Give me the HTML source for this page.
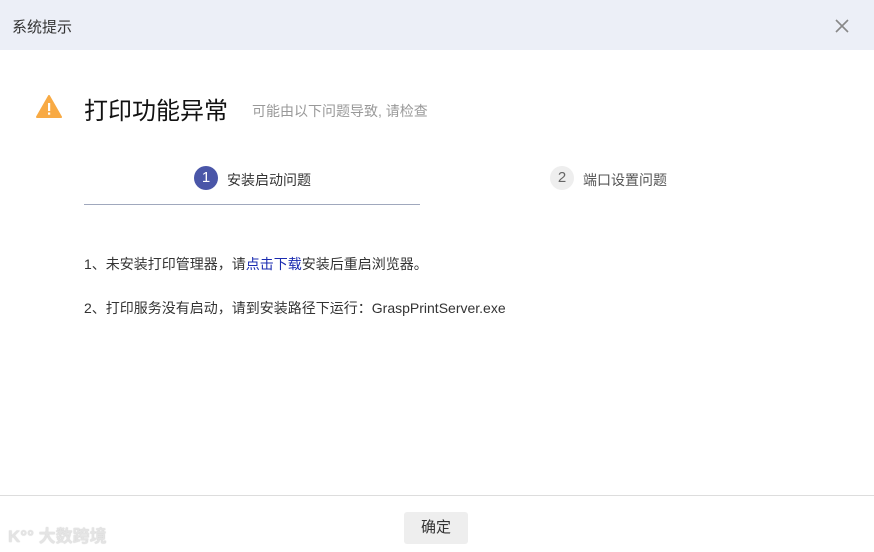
<!DOCTYPE html>
<html><head><meta charset="utf-8"><style>
*{margin:0;padding:0;box-sizing:border-box}
body{width:874px;height:552px;background:#fff;font-family:"Liberation Sans","Noto Sans CJK SC",sans-serif;position:relative;overflow:hidden;color:#333}
.hd{position:absolute;left:0;top:0;width:874px;height:50px;background:#eceff7}
.hd .t{position:absolute;left:12px;top:16px;font-size:15px;color:#333}
.abs{position:absolute;white-space:nowrap}
</style></head><body>
<div class="hd"><div class="t">系统提示</div>
<svg class="abs" style="left:835px;top:19px" width="14" height="14"><path d="M1 1L13 13M13 1L1 13" stroke="#888" stroke-width="1.6"/></svg></div>
<svg class="abs" style="left:36px;top:95px" width="26" height="23"><path d="M13 1L25 22H1Z" fill="#f8aa44" stroke="#f8aa44" stroke-linejoin="round" stroke-width="2"/><rect x="12" y="8" width="2.2" height="8" fill="#fff"/><rect x="12" y="17.5" width="2.2" height="2.2" fill="#fff"/></svg>
<div class="abs" style="left:84px;top:91px;font-size:24px;color:#111">打印功能异常</div>
<div class="abs" style="left:252px;top:101px;font-size:14px;color:#999">可能由以下问题导致, 请检查</div>
<div class="abs" style="left:194px;top:166px;width:24px;height:24px;border-radius:50%;background:#4a56a8;color:#fff;font-size:15px;text-align:center;line-height:24px">1</div>
<div class="abs" style="left:227px;top:170px;font-size:14px;color:#333">安装启动问题</div>
<div class="abs" style="left:84px;top:204px;width:336px;height:1px;background:#a0a8bd"></div>
<div class="abs" style="left:550px;top:166px;width:24px;height:24px;border-radius:50%;background:#eee;color:#666;font-size:15px;text-align:center;line-height:24px">2</div>
<div class="abs" style="left:583px;top:170px;font-size:14px;color:#555">端口设置问题</div>
<div class="abs" style="left:84px;top:254px;font-size:14px;color:#333">1、未安装打印管理器，请<span style="color:#1a2bb0">点击下载</span>安装后重启浏览器。</div>
<div class="abs" style="left:84px;top:298px;font-size:14px;color:#333">2、打印服务没有启动，请到安装路径下运行：GraspPrintServer.exe</div>
<div class="abs" style="left:0;top:495px;width:874px;height:1px;background:#ddd"></div>
<div class="abs" style="left:404px;top:512px;width:64px;height:32px;background:#eee;border-radius:3px;font-size:15px;text-align:center;line-height:32px;color:#333">确定</div>
<div class="abs" style="left:8px;top:522px;font-size:17px;color:#e4e4e4;font-weight:bold;text-shadow:0 0 1px #bbb">K°° 大数跨境</div>
</body></html>
